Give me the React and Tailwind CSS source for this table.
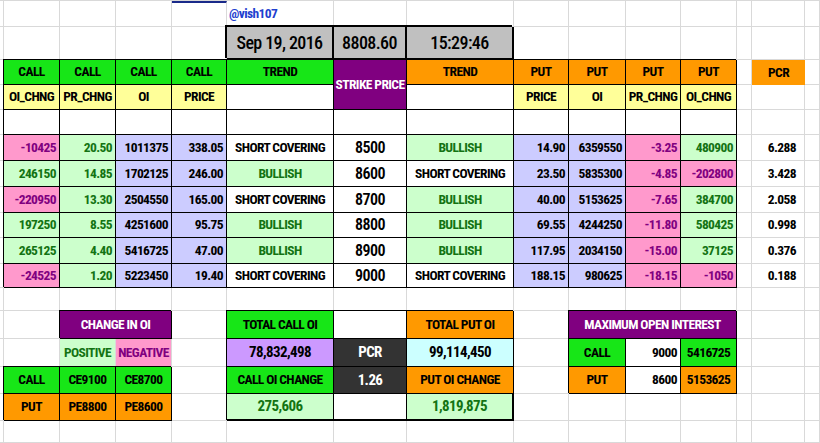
const GRID = 'border-r border-b border-[#d9d9d9]';
const BOX = 'relative z-10 border-r border-b border-black shadow-[-1px_-1px_0_#000]';
const DATE = 'relative z-10 border-r-2 border-b-2 border-black shadow-[-2px_-2px_0_#000] bg-[#c0c0c0] justify-center text-[18px] font-medium tracking-[-0.6px]';

const GREEN = 'bg-[#17e617]';
const ORANGE = 'bg-[#ff9900]';
const YELLOW = 'bg-[#ffff99]';
const PURPLE = 'bg-[#800080] text-white';
const POS = 'bg-[#ccffcc] text-[#137313]';
const NEG = 'bg-[#ff99cc] text-[#800080]';
const LAV = 'bg-[#ccccff] text-black';

const data = [
  ['-10425', '20.50', '1011375', '338.05', 'SHORT COVERING', '8500', 'BULLISH', '14.90', '6359550', '-3.25', '480900', '6.288'],
  ['246150', '14.85', '1702125', '246.00', 'BULLISH', '8600', 'SHORT COVERING', '23.50', '5835300', '-4.85', '-202800', '3.428'],
  ['-220950', '13.30', '2504550', '165.00', 'SHORT COVERING', '8700', 'BULLISH', '40.00', '5153625', '-7.65', '384700', '2.058'],
  ['197250', '8.55', '4251600', '95.75', 'BULLISH', '8800', 'BULLISH', '69.55', '4244250', '-11.80', '580425', '0.998'],
  ['265125', '4.40', '5416725', '47.00', 'BULLISH', '8900', 'BULLISH', '117.95', '2034150', '-15.00', '37125', '0.376'],
  ['-24525', '1.20', '5223450', '19.40', 'SHORT COVERING', '9000', 'SHORT COVERING', '188.15', '980625', '-18.15', '-1050', '0.188'],
];

function Cell({ className = GRID, children }) {
  return (
    <div className={`flex items-center overflow-hidden whitespace-nowrap ${className}`}>
      {children}
    </div>
  );
}

function Blank({ n }) {
  return Array.from({ length: n }, (_, i) => <Cell key={i} />);
}

const sign = (v) => (v.startsWith('-') ? NEG : POS);
const trend = (v) => (v === 'BULLISH' ? POS : 'bg-white text-black');

function DataRow({ r }) {
  const [a, b, c, d, e, f, g, h, i, j, k, m] = r;
  return (
    <>
      <Cell />
      <Cell className={`${BOX} ${sign(a)} justify-end pr-[3px]`}>{a}</Cell>
      <Cell className={`${BOX} ${sign(b)} justify-end pr-[3px]`}>{b}</Cell>
      <Cell className={`${BOX} ${LAV} justify-end pr-[3px]`}>{c}</Cell>
      <Cell className={`${BOX} ${LAV} justify-end pr-[3px]`}>{d}</Cell>
      <Cell className={`${BOX} ${trend(e)} justify-center`}>{e}</Cell>
      <Cell className={`${BOX} bg-white justify-center text-[16px] font-semibold`}>{f}</Cell>
      <Cell className={`${BOX} ${trend(g)} justify-center`}>{g}</Cell>
      <Cell className={`${BOX} ${LAV} justify-end pr-[3px]`}>{h}</Cell>
      <Cell className={`${BOX} ${LAV} justify-end pr-[3px]`}>{i}</Cell>
      <Cell className={`${BOX} ${sign(j)} justify-end pr-[3px]`}>{j}</Cell>
      <Cell className={`${BOX} ${sign(k)} justify-end pr-[3px]`}>{k}</Cell>
      <Cell />
      <Cell className={`${GRID} justify-end pr-[8px]`}>{m}</Cell>
      <Cell />
    </>
  );
}

export default function App() {
  return (
    <div className="w-[820px] h-[443px] overflow-hidden bg-white border-t border-[#d9d9d9] font-['Roboto_Condensed','Noto_Sans',sans-serif] font-stretch-condensed text-[13.5px] tracking-[-0.6px] font-bold text-black leading-none">
      <div className="grid grid-cols-[4px_56px_56px_56px_55px_107px_73px_107px_55px_57px_55px_56px_15px_53px_15px] grid-rows-[26px_33px_25px_25px_25px_26px_26px_26px_25px_26px_24px_23px_28px_28px_27px_27px_22px]">
        {/* row 1 */}
        <Blank n={4} />
        <Cell className={`${GRID} border-t-2 border-t-[#1a2a8a]`} />
        <Cell className={`${GRID} pl-[2px] text-[#1f3fcf]`}>@vish107</Cell>
        <Blank n={9} />

        {/* row 2 */}
        <Blank n={5} />
        <Cell className={DATE}>Sep 19, 2016</Cell>
        <Cell className={DATE}>8808.60</Cell>
        <Cell className={DATE}>15:29:46</Cell>
        <Blank n={7} />

        {/* row 3 */}
        <Cell />
        <Cell className={`${BOX} ${GREEN} justify-center`}>CALL</Cell>
        <Cell className={`${BOX} ${GREEN} justify-center`}>CALL</Cell>
        <Cell className={`${BOX} ${GREEN} justify-center`}>CALL</Cell>
        <Cell className={`${BOX} ${GREEN} justify-center`}>CALL</Cell>
        <Cell className={`${BOX} ${GREEN} justify-center`}>TREND</Cell>
        <Cell className={`${BOX} ${PURPLE} row-span-2 justify-center`}>STRIKE PRICE</Cell>
        <Cell className={`${BOX} ${ORANGE} justify-center`}>TREND</Cell>
        <Cell className={`${BOX} ${ORANGE} justify-center`}>PUT</Cell>
        <Cell className={`${BOX} ${ORANGE} justify-center`}>PUT</Cell>
        <Cell className={`${BOX} ${ORANGE} justify-center`}>PUT</Cell>
        <Cell className={`${BOX} ${ORANGE} justify-center`}>PUT</Cell>
        <Cell />
        <Cell className={`${ORANGE} justify-center`}>PCR</Cell>
        <Cell />

        {/* row 4 */}
        <Cell />
        <Cell className={`${BOX} ${YELLOW} justify-center`}>OI_CHNG</Cell>
        <Cell className={`${BOX} ${YELLOW} justify-center`}>PR_CHNG</Cell>
        <Cell className={`${BOX} ${YELLOW} justify-center`}>OI</Cell>
        <Cell className={`${BOX} ${YELLOW} justify-center`}>PRICE</Cell>
        <Cell className={`${BOX} bg-white`} />
        <Cell className={`${BOX} bg-white`} />
        <Cell className={`${BOX} ${YELLOW} justify-center`}>PRICE</Cell>
        <Cell className={`${BOX} ${YELLOW} justify-center`}>OI</Cell>
        <Cell className={`${BOX} ${YELLOW} justify-center`}>PR_CHNG</Cell>
        <Cell className={`${BOX} ${YELLOW} justify-center`}>OI_CHNG</Cell>
        <Blank n={3} />

        {/* row 5 */}
        <Cell />
        {Array.from({ length: 11 }, (_, i) => (
          <Cell key={i} className={`${BOX} bg-white`} />
        ))}
        <Blank n={3} />

        {/* data rows */}
        {data.map((r) => (
          <DataRow key={r[5]} r={r} />
        ))}

        {/* row 12 */}
        <Blank n={15} />

        {/* row 13 */}
        <Blank n={2} />
        <Cell className={`${BOX} ${PURPLE} col-span-2 justify-center`}>CHANGE IN OI</Cell>
        <Cell />
        <Cell className={`${BOX} ${GREEN} justify-center`}>TOTAL CALL OI</Cell>
        <Cell className={`${BOX} bg-white`} />
        <Cell className={`${BOX} ${ORANGE} justify-center`}>TOTAL PUT OI</Cell>
        <Cell />
        <Cell className={`${BOX} ${PURPLE} col-span-3 justify-center`}>MAXIMUM OPEN INTEREST</Cell>
        <Blank n={3} />

        {/* row 14 */}
        <Blank n={2} />
        <Cell className={`${GRID} ${POS} justify-center`}>POSITIVE</Cell>
        <Cell className={`${GRID} ${NEG} justify-center`}>NEGATIVE</Cell>
        <Cell />
        <Cell className={`${BOX} bg-[#cc99ff] justify-center text-[15px]`}>78,832,498</Cell>
        <Cell className={`${BOX} bg-[#333333] text-white justify-center text-[15px]`}>PCR</Cell>
        <Cell className={`${BOX} bg-[#ccffff] justify-center text-[15px]`}>99,114,450</Cell>
        <Cell />
        <Cell className={`${BOX} ${GREEN} justify-center`}>CALL</Cell>
        <Cell className={`${BOX} bg-white justify-end pr-[3px]`}>9000</Cell>
        <Cell className={`${BOX} ${GREEN} justify-center`}>5416725</Cell>
        <Blank n={3} />

        {/* row 15 */}
        <Cell />
        <Cell className={`${BOX} ${GREEN} justify-center`}>CALL</Cell>
        <Cell className={`${BOX} ${GREEN} justify-center`}>CE9100</Cell>
        <Cell className={`${BOX} ${GREEN} justify-center`}>CE8700</Cell>
        <Cell />
        <Cell className={`${BOX} ${GREEN} justify-center`}>CALL OI CHANGE</Cell>
        <Cell className={`${BOX} bg-[#333333] text-white justify-center text-[15px]`}>1.26</Cell>
        <Cell className={`${BOX} ${ORANGE} justify-center`}>PUT OI CHANGE</Cell>
        <Cell />
        <Cell className={`${BOX} ${ORANGE} justify-center`}>PUT</Cell>
        <Cell className={`${BOX} bg-white justify-end pr-[3px]`}>8600</Cell>
        <Cell className={`${BOX} ${ORANGE} justify-center`}>5153625</Cell>
        <Blank n={3} />

        {/* row 16 */}
        <Cell />
        <Cell className={`${BOX} ${ORANGE} justify-center`}>PUT</Cell>
        <Cell className={`${BOX} ${ORANGE} justify-center`}>PE8800</Cell>
        <Cell className={`${BOX} ${ORANGE} justify-center`}>PE8600</Cell>
        <Cell />
        <Cell className={`${BOX} ${POS} border-b-2 justify-center text-[15px]`}>275,606</Cell>
        <Cell className={`${BOX} bg-white border-b-2`} />
        <Cell className={`${BOX} ${POS} border-b-2 border-r-2 justify-center text-[15px]`}>1,819,875</Cell>
        <Blank n={7} />

        {/* row 17 */}
        <Blank n={15} />
      </div>
    </div>
  );
}
